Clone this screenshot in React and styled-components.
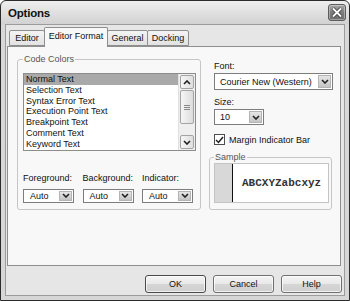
import React from 'react';
import styled, { createGlobalStyle } from 'styled-components';

const GlobalStyle = createGlobalStyle`
  html, body {
    margin: 0;
    padding: 0;
    background: #ffffff;
  }
  body {
    font-family: "Liberation Sans", Arial, sans-serif;
    color: #111;
  }
  * {
    box-sizing: border-box;
  }
`;

const Window = styled.div`
  width: 350px;
  height: 301px;
  border: 1px solid #2b2b2b;
  border-radius: 6px 6px 0 0;
  background: linear-gradient(#eeeeee, #d2d2d2 23px, #d8d8d8 24px, #d6d6d6);
  display: flex;
  flex-direction: column;
  overflow: hidden;
`;

const TitleBar = styled.div`
  height: 23px;
  display: flex;
  align-items: center;
  justify-content: space-between;
  padding: 0 3px 0 7px;
`;

const Title = styled.span`
  font-size: 11.5px;
  font-weight: bold;
  letter-spacing: -0.2px;
  color: #111;
`;

const CloseButton = styled.div`
  width: 18px;
  height: 17px;
  border: 1px solid #5c5c5c;
  border-radius: 3px;
  background: linear-gradient(#a8a8a8, #7c7c7c 50%, #6e6e6e);
  box-shadow: inset 0 0 0 1px rgba(255, 255, 255, 0.35);
  display: flex;
  align-items: center;
  justify-content: center;
`;

const Client = styled.div`
  flex: 1;
  margin: 0 4px 4px 4px;
  border: 1px solid #9c9c9c;
  background: #e6e6e6;
  display: flex;
  flex-direction: column;
  padding: 2px 3px 0 1px;
`;

const TabRow = styled.div`
  height: 19px;
  display: flex;
  align-items: flex-end;
  padding-left: 2px;
  position: relative;
  z-index: 1;
`;

const Tab = styled.div`
  width: ${(p) => p.$w}px;
  height: ${(p) => (p.$active ? 20 : 16)}px;
  margin-bottom: ${(p) => (p.$active ? -1 : 0)}px;
  margin-left: -1px;
  border: 1px solid #8e8e8e;
  border-bottom: ${(p) => (p.$active ? 'none' : '1px solid #8e8e8e')};
  border-radius: 2px 2px 0 0;
  background: ${(p) =>
    p.$active ? '#f8f8f8' : 'linear-gradient(#f4f4f4, #e2e2e2)'};
  font-size: 9px;
  display: flex;
  align-items: center;
  justify-content: center;
  padding-bottom: ${(p) => (p.$active ? 3 : 0)}px;
  &:first-child {
    margin-left: 0;
  }
`;

const Panel = styled.div`
  flex: 1;
  border: 1px solid #8e8e8e;
  background: #f8f8f8;
  display: flex;
  gap: 8px;
  padding: 7px 7px 0 9px;
`;

const Group = styled.fieldset`
  margin: 0;
  width: ${(p) => p.$w}px;
  border: 1px solid #c6c6c6;
  border-radius: 3px;
  padding: ${(p) => p.$pad};
`;

const Legend = styled.legend`
  font-size: 9px;
  line-height: 11px;
  padding: 0 1px;
  color: #555;
`;

const ListBox = styled.div`
  margin-top: 8px;
  width: 173px;
  height: 78px;
  border: 1px solid #8c8c8c;
  background: #fff;
  display: flex;
  overflow: hidden;
`;

const ListItems = styled.div`
  flex: 1;
  display: flex;
  flex-direction: column;
`;

const ListItem = styled.div`
  height: 10.8px;
  line-height: 10.8px;
  font-size: 9px;
  padding-left: 2px;
  white-space: nowrap;
  background: ${(p) => (p.$selected ? '#a9a9a9' : 'transparent')};
`;

const ScrollBar = styled.div`
  width: 17px;
  background: #efefef;
  border-left: 1px solid #e0e0e0;
  display: flex;
  flex-direction: column;
  padding: 1px;
`;

const ScrollButton = styled.div`
  height: 14px;
  border: 1px solid #a4a4a4;
  border-radius: 2px;
  background: linear-gradient(90deg, #f6f6f6, #dedede);
  display: flex;
  align-items: center;
  justify-content: center;
`;

const ScrollTrack = styled.div`
  flex: 1;
  display: flex;
  flex-direction: column;
  padding: 1px 0;
`;

const Thumb = styled.div`
  height: 34px;
  border: 1px solid #a4a4a4;
  border-radius: 2px;
  background: linear-gradient(90deg, #f6f6f6, #dcdcdc);
  display: flex;
  flex-direction: column;
  align-items: center;
  justify-content: center;
  gap: 1px;
`;

const Grip = styled.div`
  width: 6px;
  height: 1px;
  background: #8a8a8a;
`;

const SelectorRow = styled.div`
  margin-top: 22px;
  display: flex;
  gap: 8.5px;
`;

const Selector = styled.div`
  display: flex;
  flex-direction: column;
  gap: 4.5px;
`;

const Label = styled.div`
  font-size: 9px;
  line-height: 11px;
  padding-left: ${(p) => p.$indent || 0}px;
  margin-top: ${(p) => p.$top || 0}px;
  white-space: nowrap;
`;

const Combo = styled.div`
  width: ${(p) => p.$w}px;
  height: ${(p) => p.$h}px;
  margin-left: ${(p) => p.$indent || 0}px;
  margin-top: ${(p) => p.$top || 0}px;
  border: 1px solid #7d7d7d;
  background: #fff;
  display: flex;
  align-items: stretch;
  padding: 1px;
`;

const ComboValue = styled.div`
  flex: 1;
  font-size: 9px;
  display: flex;
  align-items: center;
  padding-left: ${(p) => p.$pad || 4}px;
  white-space: nowrap;
`;

const DropButton = styled.div`
  width: 13px;
  border: 1px solid #b4b4b4;
  background: linear-gradient(#e6e6e6, #c4c4c4);
  display: flex;
  align-items: center;
  justify-content: center;
`;

const RightColumn = styled.div`
  width: 124px;
  display: flex;
  flex-direction: column;
`;

const CheckRow = styled.div`
  margin-top: 9px;
  padding-left: 5px;
  display: flex;
  align-items: center;
  gap: 4px;
  font-size: 9px;
`;

const CheckBox = styled.div`
  width: 11px;
  height: 11px;
  border: 1px solid #4e4e4e;
  background: #fff;
  display: flex;
  align-items: center;
  justify-content: center;
`;

const SampleBox = styled.div`
  height: 40px;
  border: 1px solid #c4c4c4;
  background: #fff;
  display: flex;
`;

const Margin = styled.div`
  width: 18px;
  background: #d8d8d8;
  border-right: 1.5px solid #111;
`;

const SampleText = styled.div`
  flex: 1;
  display: flex;
  align-items: center;
  padding-left: 9px;
  font-family: "Liberation Mono", "Courier New", monospace;
  font-size: 11px;
  font-weight: bold;
  color: #333;
`;

const ButtonRow = styled.div`
  height: 29px;
  display: flex;
  justify-content: flex-end;
  gap: 7px;
  padding: 9px 0 2px 0;
  margin-right: -1px;
`;

const Button = styled.div`
  width: 61px;
  height: 18px;
  border: 1px solid ${(p) => (p.$default ? '#4a4a4a' : '#707070')};
  border-radius: 3px;
  background: linear-gradient(#f4f4f4, #e8e8e8 50%, #d6d6d6 51%, #cfcfcf);
  box-shadow: inset 0 0 0 1px rgba(255, 255, 255, 0.7);
  font-size: 9px;
  display: flex;
  align-items: center;
  justify-content: center;
`;

const Chevron = ({ up }) => (
  <svg width="8" height="5" viewBox="0 0 8 5">
    <path
      d={up ? 'M1 4 L4 1 L7 4' : 'M1 1 L4 4 L7 1'}
      fill="none"
      stroke="#222"
      strokeWidth="1.6"
    />
  </svg>
);

const Dropdown = ({ w, h, value, indent, top, pad }) => (
  <Combo $w={w} $h={h} $indent={indent} $top={top}>
    <ComboValue $pad={pad}>{value}</ComboValue>
    <DropButton>
      <Chevron />
    </DropButton>
  </Combo>
);

const codeItems = [
  'Normal Text',
  'Selection Text',
  'Syntax Error Text',
  'Execution Point Text',
  'Breakpoint Text',
  'Comment Text',
  'Keyword Text',
];

const tabs = [
  { name: 'Editor', w: 36 },
  { name: 'Editor Format', w: 64, active: true },
  { name: 'General', w: 41 },
  { name: 'Docking', w: 42 },
];

const App = () => (
  <>
    <GlobalStyle />
    <Window>
      <TitleBar>
        <Title>Options</Title>
        <CloseButton>
          <svg width="12" height="11" viewBox="0 0 12 11">
            <path d="M2 1.5 L10 9.5 M10 1.5 L2 9.5" stroke="#3a3a3a" strokeWidth="3.4" />
            <path d="M2 1.5 L10 9.5 M10 1.5 L2 9.5" stroke="#fff" strokeWidth="1.8" />
          </svg>
        </CloseButton>
      </TitleBar>
      <Client>
        <TabRow>
          {tabs.map((t) => (
            <Tab key={t.name} $w={t.w} $active={t.active}>
              {t.name}
            </Tab>
          ))}
        </TabRow>
        <Panel>
          <Group $w={184} $pad="0 3px 6px 5px" style={{ alignSelf: 'flex-start' }}>
            <Legend>Code Colors</Legend>
            <ListBox>
              <ListItems>
                {codeItems.map((item, i) => (
                  <ListItem key={item} $selected={i === 0}>
                    {item}
                  </ListItem>
                ))}
              </ListItems>
              <ScrollBar>
                <ScrollButton>
                  <Chevron up />
                </ScrollButton>
                <ScrollTrack>
                  <Thumb>
                    <Grip />
                    <Grip />
                    <Grip />
                  </Thumb>
                </ScrollTrack>
                <ScrollButton>
                  <Chevron />
                </ScrollButton>
              </ScrollBar>
            </ListBox>
            <SelectorRow>
              {['Foreground:', 'Background:', 'Indicator:'].map((l) => (
                <Selector key={l}>
                  <Label>{l}</Label>
                  <Dropdown w={51} h={14} value="Auto" pad={5} />
                </Selector>
              ))}
            </SelectorRow>
          </Group>
          <RightColumn>
            <Label $indent={5} $top={6.5}>Font:</Label>
            <Dropdown w={119} h={17} value="Courier New (Western)" indent={5} top={1.5} />
            <Label $indent={5} $top={6.5}>Size:</Label>
            <Dropdown w={50} h={16} value="10" indent={5} top={1.5} />
            <CheckRow>
              <CheckBox>
                <svg width="9" height="8" viewBox="0 0 9 8">
                  <path d="M1 4 L3.5 6.5 L8 1" fill="none" stroke="#222" strokeWidth="1.5" />
                </svg>
              </CheckBox>
              Margin Indicator Bar
            </CheckRow>
            <Group $w={123} $pad="0 2px 6px 4px" style={{ marginTop: 6.5 }}>
              <Legend>Sample</Legend>
              <SampleBox>
                <Margin />
                <SampleText>ABCXYZabcxyz</SampleText>
              </SampleBox>
            </Group>
          </RightColumn>
        </Panel>
        <ButtonRow>
          <Button $default>OK</Button>
          <Button>Cancel</Button>
          <Button>Help</Button>
        </ButtonRow>
      </Client>
    </Window>
  </>
);

export default App;
